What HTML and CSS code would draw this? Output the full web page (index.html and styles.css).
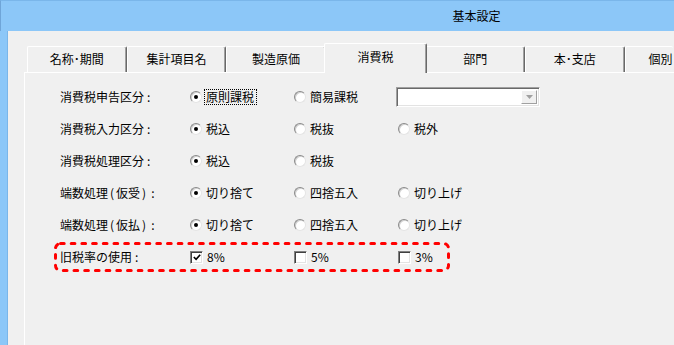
FILE: index.html
```html
<!DOCTYPE html>
<html lang="ja">
<head>
    <meta charset="UTF-8">
    <title>基本設定</title>
    <link rel="stylesheet" href="styles.css">
</head>
<body>
    <div class="window">
        <div class="titlebar">
            <span class="title">基本設定</span>
        </div>

        <div class="client">
            <div class="tabs">
                <div class="tab">名称･期間</div>
                <div class="tab">集計項目名</div>
                <div class="tab">製造原価</div>
                <div class="tab active">消費税</div>
                <div class="tab">部門</div>
                <div class="tab">本･支店</div>
                <div class="tab last">個別</div>
            </div>

            <div class="panel">
                <div class="row">
                    <div class="label">消費税申告区分<span class="colon">:</span></div>
                    <div class="opt"><span class="radio checked"></span><span class="focus">原則課税</span></div>
                    <div class="opt"><span class="radio"></span>簡易課税</div>
                    <div class="combo">
                        <div class="combo-btn">
                            <svg width="7" height="4" viewBox="0 0 7 4"><path d="M0 0 H7 L3.5 4 Z" fill="#a0a0a0"/></svg>
                        </div>
                    </div>
                </div>

                <div class="row">
                    <div class="label">消費税入力区分<span class="colon">:</span></div>
                    <div class="opt"><span class="radio checked"></span>税込</div>
                    <div class="opt"><span class="radio"></span>税抜</div>
                    <div class="opt"><span class="radio"></span>税外</div>
                </div>

                <div class="row">
                    <div class="label">消費税処理区分<span class="colon">:</span></div>
                    <div class="opt"><span class="radio checked"></span>税込</div>
                    <div class="opt"><span class="radio"></span>税抜</div>
                </div>

                <div class="row">
                    <div class="label">端数処理<span class="paren">(</span>仮受<span class="paren">)</span><span class="colon">:</span></div>
                    <div class="opt"><span class="radio checked"></span>切り捨て</div>
                    <div class="opt"><span class="radio"></span>四捨五入</div>
                    <div class="opt"><span class="radio"></span>切り上げ</div>
                </div>

                <div class="row">
                    <div class="label">端数処理<span class="paren">(</span>仮払<span class="paren">)</span><span class="colon">:</span></div>
                    <div class="opt"><span class="radio checked"></span>切り捨て</div>
                    <div class="opt"><span class="radio"></span>四捨五入</div>
                    <div class="opt"><span class="radio"></span>切り上げ</div>
                </div>

                <div class="row highlight">
                    <svg class="dash-box" width="396" height="30" viewBox="0 0 396 30">
                        <rect x="1.5" y="1.5" width="393" height="27" rx="5" ry="5" fill="none" stroke="#f00" stroke-width="3" stroke-linecap="round" stroke-dasharray="3.7 7"/>
                    </svg>
                    <div class="label">旧税率の使用<span class="colon">:</span></div>
                    <div class="opt"><span class="check checked">
                        <svg width="11" height="11" viewBox="0 0 11 11"><path d="M2 5 L4.5 7.5 L9 2.5" fill="none" stroke="#000" stroke-width="1.8"/></svg>
                    </span>8%</div>
                    <div class="opt"><span class="check"></span>5%</div>
                    <div class="opt"><span class="check"></span>3%</div>
                </div>
            </div>
        </div>
    </div>
</body>
</html>
```

FILE: styles.css
```css
* {
    margin: 0;
    padding: 0;
    box-sizing: border-box;
}

body {
    width: 674px;
    height: 345px;
    overflow: hidden;
    background: #f0f0f0;
    font-family: "Noto Sans CJK JP", "Liberation Sans", sans-serif;
    font-size: 12px;
    color: #000;
}

.window {
    width: 952px;
    height: 345px;
    display: flex;
    flex-direction: column;
}

.titlebar {
    height: 31px;
    background: #8cc7f8;
    border-top: 1px solid #7ab6ea;
    border-left: 1px solid #6fa5d8;
    display: flex;
    align-items: center;
    justify-content: center;
    padding-bottom: 1px;
}

.title {
    font-size: 12px;
    line-height: 14px;
}

.client {
    flex: 1;
    background: #f0f0f0;
    border-left: 7px solid #8cc7f8;
    box-shadow: inset 1px 0 0 #7ab6ea;
    padding: 12px 0 0 17px;
    display: flex;
    flex-direction: column;
}

/* tabs */
.tabs {
    display: flex;
    align-items: flex-end;
    padding-left: 3px;
    height: 29px;
}

.tab {
    width: 99.6px;
    height: 26px;
    background: #f0f0f0;
    border-top: 1px solid #fff;
    border-left: 1px solid #fff;
    border-right: 1px solid #696969;
    box-shadow: inset -1px 0 0 #a0a0a0;
    border-top-left-radius: 2px;
    border-top-right-radius: 2px;
    text-align: center;
    line-height: 14px;
    padding-top: 5px;
    flex-shrink: 0;
    white-space: nowrap;
}

.tab.last {
    width: 48px;
    text-align: left;
    padding-left: 23px;
    border-right: none;
    box-shadow: none;
    overflow: hidden;
}

.tab.active {
    height: 30px;
    margin: 0 -2px -1px;
    width: 103.6px;
    padding-top: 6px;
    position: relative;
    z-index: 1;
}

/* panel */
.panel {
    flex: 1;
    border-top: 1px solid #fff;
    border-left: 1px solid #fff;
    padding: 8px 0 0 35px;
}

.row {
    display: flex;
    align-items: center;
    height: 32px;
    line-height: 14px;
}

.row.highlight {
    position: relative;
}

.dash-box {
    position: absolute;
    left: -6px;
    top: 1px;
}

.label {
    width: 130px;
    flex-shrink: 0;
    white-space: nowrap;
}

.colon {
    margin-left: 3px;
}

.paren {
    padding: 0 2px;
}

.opt {
    width: 104px;
    flex-shrink: 0;
    display: flex;
    align-items: center;
}

.radio {
    width: 12px;
    height: 12px;
    border-radius: 50%;
    background: #fff;
    border: 1px solid;
    border-color: #8a8a8a #e4e4e4 #e4e4e4 #8a8a8a;
    box-shadow: inset 1px 1px 0 #d0d0d0;
    margin-right: 4px;
    position: relative;
    flex-shrink: 0;
}

.radio.checked::after {
    content: "";
    position: absolute;
    left: 3px;
    top: 3px;
    width: 4px;
    height: 4px;
    border-radius: 50%;
    background: #000;
}

.focus {
    outline: 1px dotted #000;
    outline-offset: 0;
    padding: 0 2px 0 1px;
    margin-left: -1px;
}

.check {
    width: 13px;
    height: 13px;
    background: #fff;
    border: 1px solid;
    border-color: #808080 #fff #fff #808080;
    box-shadow: inset 1px 1px 0 #404040, inset -1px -1px 0 #e3e3e3;
    margin-right: 4px;
    flex-shrink: 0;
    display: flex;
    align-items: center;
    justify-content: center;
}

.check svg {
    margin: 1px 0 0 1px;
}

.combo {
    width: 144px;
    height: 20px;
    margin-left: -2px;
    background: #fff;
    border: 1px solid;
    border-color: #a0a0a0 #fff #fff #a0a0a0;
    box-shadow: inset 1px 1px 0 #696969, inset -1px -1px 0 #e3e3e3;
    display: flex;
    justify-content: flex-end;
    padding: 2px;
}

.combo-btn {
    width: 16px;
    height: 100%;
    background: #f0f0f0;
    border: 1px solid;
    border-color: #fff #a0a0a0 #a0a0a0 #fff;
    display: flex;
    align-items: center;
    justify-content: center;
}
```
